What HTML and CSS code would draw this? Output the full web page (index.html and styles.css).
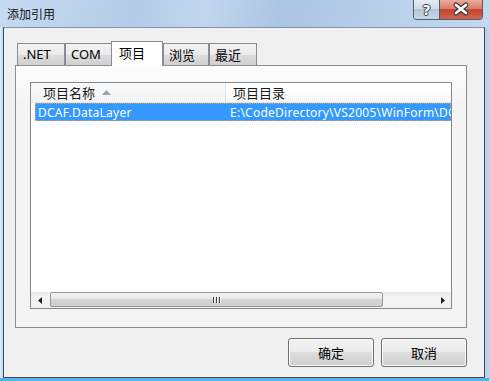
FILE: index.html
```html
<!DOCTYPE html>
<html>

  <head>
    <title>添加引用</title>
    <link rel="stylesheet" href="styles.css">
  </head>

  <body>
    <div class="window">

      <div class="titlebar">
        <span class="title">添加引用</span>
        <div class="caption-buttons">
          <div class="cap-btn help-btn">?</div>
          <div class="cap-btn close-btn">
            <svg width="42" height="19" viewBox="0 0 42 19">
              <path d="M16 5 L26 13 M26 5 L16 13" stroke="#3a3a3a" stroke-width="5" stroke-linecap="round"/>
              <path d="M16 5 L26 13 M26 5 L16 13" stroke="#ffffff" stroke-width="2.6" stroke-linecap="round"/>
            </svg>
          </div>
        </div>
      </div>

      <div class="client">

        <div class="tabs">
          <div class="tab tab-net">.NET</div>
          <div class="tab tab-com">COM</div>
          <div class="tab tab-project active">项目</div>
          <div class="tab tab-browse">浏览</div>
          <div class="tab tab-recent">最近</div>
        </div>

        <div class="tab-panel">
          <div class="list-view">

            <div class="list-header">
              <div class="col col-name">
                项目名称
                <svg class="sort-arrow" width="9" height="5" viewBox="0 0 9 5">
                  <polygon points="0,5 4.5,0 9,5" fill="#9aa5b1"/>
                </svg>
              </div>
              <div class="col col-dir">项目目录</div>
            </div>

            <div class="list-body">
              <div class="list-row selected">
                <div class="cell cell-name">DCAF.DataLayer</div>
                <div class="cell cell-dir">E:\CodeDirectory\VS2005\WinForm\DCAF.DataLayer</div>
              </div>
            </div>

            <!-- horizontal scroll bar of the list -->
            <div class="h-scroll">
              <div class="scroll-arrow">
                <svg width="4" height="7" viewBox="0 0 4 7"><polygon points="4,0 0,3.5 4,7" fill="#222"/></svg>
              </div>
              <div class="scroll-thumb">
                <span class="grip"></span><span class="grip"></span><span class="grip"></span>
              </div>
              <div class="scroll-track"></div>
              <div class="scroll-arrow">
                <svg width="4" height="7" viewBox="0 0 4 7"><polygon points="0,0 4,3.5 0,7" fill="#222"/></svg>
              </div>
            </div>

          </div>
        </div>

        <div class="dialog-buttons">
          <button class="dlg-button">确定</button>
          <button class="dlg-button">取消</button>
        </div>

      </div>
    </div>
  </body>

</html>
```

FILE: styles.css
```css
body{
  margin: 0;
  font-family: "Noto Sans", "Noto Sans CJK SC", sans-serif;
  font-size: 12px;
  color: #000;
}

.window{
  width: 489px;
  height: 381px;
  display: flex;
  flex-direction: column;
  background-color: #bcd3ec;
  box-shadow: inset 0 -3px #55b3e8, inset 2px 0 #d7e5f4;
  overflow: hidden;
}

/* title bar */
.titlebar{
  height: 27px;
  display: flex;
  background: linear-gradient(100deg, #c6daf0 0%, #b4cce8 28%, #c2d7ee 42%, #aac4e3 58%, #b9d0ea 78%, #c4d8ee 100%);
}

.title{
  padding-left: 7px;
  line-height: 30px;
  color: #111;
}

.caption-buttons{
  margin-left: auto;
  margin-right: 6px;
  height: 19px;
  display: flex;
  border: 1px solid #4d5d72;
  border-top: none;
  border-radius: 0 0 4px 4px;
  overflow: hidden;
}

.cap-btn{
  height: 19px;
  display: flex;
  align-items: center;
  justify-content: center;
}

.help-btn{
  width: 25px;
  border-right: 1px solid #4d5d72;
  background: linear-gradient(#e4ecf5, #cfdcea 45%, #b3c5da 50%, #c8d8e9);
  color: #fff;
  font-family: "DejaVu Sans", sans-serif;
  font-weight: bold;
  font-size: 14px;
  text-shadow: 1px 0 #3b3b3b, -1px 0 #3b3b3b, 0 1px #3b3b3b, 0 -1px #3b3b3b;
}

.close-btn{
  width: 42px;
  background: linear-gradient(#eaab9d, #d97f6f 45%, #c4442f 50%, #cf6650);
}

/* client area */
.client{
  flex: 1;
  min-width: 0;
  margin: 0 4px 3px 3px;
  border: 1px solid #3c4a5b;
  border-top-color: #7f93ab;
  background-color: #f0f0f0;
  display: flex;
  flex-direction: column;
  padding: 13px 17px 10px 11px;
}

.tabs{
  height: 24px;
  display: flex;
  align-items: flex-end;
  padding-left: 2px;
}

.tab{
  height: 22px;
  box-sizing: border-box;
  border: 1px solid #898c95;
  border-bottom: none;
  background: linear-gradient(#f3f3f3, #ebebeb 50%, #dddddd 50%, #d0d0d0);
  display: flex;
  align-items: center;
  padding-left: 5px;
  padding-bottom: 1px;
  font-size: 13px;
}

.tab-net{ width: 48px; }
.tab-com{ width: 47px; }
.tab-browse{ width: 46px; }
.tab-recent{ width: 48px; }

.tab.active{
  width: 52px;
  height: 25px;
  margin-left: -1px;
  margin-bottom: -1px;
  padding-left: 7px;
  padding-bottom: 3px;
  background: #fff;
  position: relative;
  z-index: 1;
}

.tab-panel{
  height: 263px;
  box-sizing: border-box;
  border: 1px solid #898c95;
  background: linear-gradient(#fdfdfd, #f4f4f4 40px, #f4f4f4);
  padding: 16px 14px 18px 14px;
  display: flex;
}

/* list view */
.list-view{
  flex: 1;
  min-width: 0;
  overflow: hidden;
  border: 1px solid #828790;
  background-color: #fff;
  display: flex;
  flex-direction: column;
}

.list-header{
  height: 20px;
  box-sizing: border-box;
  border-bottom: 1px solid #e5e5e5;
  background: linear-gradient(#ffffff, #ffffff 45%, #f5f6f7);
  display: flex;
}

.col{
  display: flex;
  align-items: center;
  color: #1a1a1a;
  font-size: 13px;
}

.col-name{
  width: 195px;
  box-sizing: border-box;
  border-right: 1px solid #e3e4e6;
  padding-left: 12px;
  background: linear-gradient(#fafafa, #f3f4f5);
}

.sort-arrow{
  margin-left: 7px;
}

.col-dir{
  flex: 1;
  padding-left: 7px;
}

.list-body{
  flex: 1;
  overflow: hidden;
}

.list-row{
  height: 18px;
  margin-left: 4px;
  display: flex;
  overflow: hidden;
  white-space: nowrap;
  letter-spacing: 0.25px;
}

.list-row.selected{
  background-color: #3399ff;
  color: #fff;
  outline: 1px dotted #d8a468;
  outline-offset: -1px;
}

.cell{
  display: flex;
  align-items: center;
  overflow: hidden;
}

.cell-name{
  width: 190px;
  flex-shrink: 0;
  padding-left: 3px;
  box-sizing: border-box;
}

.cell-dir{
  padding-left: 5px;
}

/* scroll bar */
.h-scroll{
  height: 16px;
  flex-shrink: 0;
  display: flex;
  background: linear-gradient(#e8e8e8, #f3f3f3 30%, #f3f3f3);
}

.scroll-arrow{
  width: 17px;
  flex-shrink: 0;
  display: flex;
  align-items: center;
  justify-content: center;
}

.scroll-thumb{
  width: 333px;
  height: 15px;
  flex-shrink: 0;
  margin-left: 2px;
  box-sizing: border-box;
  border: 1px solid #979797;
  border-radius: 2px;
  background: linear-gradient(#f3f3f3, #e6e6e6 50%, #d6d6d6 50%, #cdcdcd);
  display: flex;
  align-items: center;
  justify-content: center;
  gap: 2px;
}

.grip{
  width: 1px;
  height: 6px;
  background-color: #3d3d3d;
  box-shadow: 1px 0 #fafafa;
}

.scroll-track{
  flex: 1;
}

/* OK / Cancel */
.dialog-buttons{
  margin-top: 10px;
  display: flex;
  justify-content: flex-end;
  gap: 7px;
}

.dlg-button{
  width: 86px;
  height: 29px;
  border: 1px solid #707070;
  border-radius: 3px;
  background: linear-gradient(#f2f2f2, #ebebeb 50%, #dddddd 50%, #cfcfcf);
  box-shadow: inset 0 0 0 1px #fcfcfc;
  font-family: "Noto Sans CJK SC", sans-serif;
  font-size: 13px;
  color: #000;
  padding: 0;
}
```
